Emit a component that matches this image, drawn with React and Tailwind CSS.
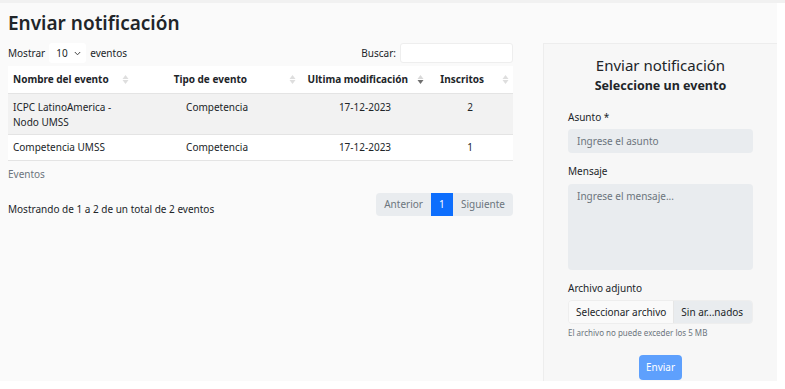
import React from "react";

function SortIcon({ active }) {
  return (
    <svg width="7" height="11" viewBox="0 0 7 11" className="shrink-0">
      <path d="M3.5 1 L6.5 5 H0.5 Z" fill={active ? "#d8d8d8" : "#dedede"} />
      <path d="M3.5 10 L6.5 6 H0.5 Z" fill={active ? "#6f6f6f" : "#dedede"} />
    </svg>
  );
}

export default function App() {
  return (
    <div className="w-[785px] h-[389px] bg-white overflow-hidden text-[#212529]" style={{ fontFamily: '"Noto Sans", "Open Sans", sans-serif' }}>
      <div className="h-[3px] bg-[#f1f1f1]" />
      <div className="w-[777px] h-[378px] bg-[#fafafa] flex">
        {/* Left */}
        <div className="w-[513px] pl-[8px] flex flex-col">
          <h1 className="text-[19px] font-semibold leading-none mt-[11px] h-[29px] text-[#212529]">Enviar notificación</h1>
          <div className="flex items-center justify-between h-[20px] text-[10px]">
            <div className="flex items-center gap-[4px]">
              <span>Mostrar</span>
              <div className="w-[37px] h-[20px] bg-white rounded-[3px] flex items-center pl-[7px] gap-[6px]">
                <span>10</span>
                <svg width="7" height="5" viewBox="0 0 7 5"><path d="M0.8 1 L3.5 3.8 L6.2 1" stroke="#444" strokeWidth="1" fill="none" /></svg>
              </div>
              <span>eventos</span>
            </div>
            <div className="flex items-center gap-[4px]">
              <span>Buscar:</span>
              <div className="w-[113px] h-[20px] bg-white rounded-[3px] border border-[#eeeeee]" />
            </div>
          </div>
          <table className="w-[505px] mt-[3px] text-[10px] border-collapse">
            <thead>
              <tr className="bg-white h-[27px] border-b border-[#e4e4e4]">
                <th className="text-left pl-[5px] font-bold w-[124px]"><div className="flex items-center justify-between pr-[3px]"><span>Nombre del evento</span><SortIcon /></div></th>
                <th className="font-bold w-[164px]"><div className="flex items-center justify-end gap-[42px] pr-[0px]"><span>Tipo de evento</span><SortIcon /></div></th>
                <th className="font-bold w-[136px]"><div className="flex items-center justify-end gap-[9px] pr-[8px]"><span>Ultima modificación</span><SortIcon active /></div></th>
                <th className="font-bold"><div className="flex items-center justify-end gap-[18px] pr-[4px]"><span>Inscritos</span><SortIcon /></div></th>
              </tr>
            </thead>
            <tbody>
              <tr className="bg-[#f2f2f2] h-[41px] border-b border-[#e4e4e4] align-top">
                <td className="pl-[5px] pt-[6px] leading-[15px]">ICPC LatinoAmerica -<br />Nodo UMSS</td>
                <td className="pt-[6px] leading-[15px] text-right pr-[48px]">Competencia</td>
                <td className="pt-[6px] leading-[15px] text-center pl-[2px]">17-12-2023</td>
                <td className="pt-[6px] leading-[15px] text-center pr-[5px]">2</td>
              </tr>
              <tr className="bg-white h-[26px] border-b border-[#e4e4e4]">
                <td className="pl-[5px]">Competencia UMSS</td>
                <td className="text-right pr-[48px]">Competencia</td>
                <td className="text-center pl-[2px]">17-12-2023</td>
                <td className="text-center pr-[5px]">1</td>
              </tr>
            </tbody>
          </table>
          <div className="text-[10px] text-[#6c757d] mt-[6px] leading-[14px]">Eventos</div>
          <div className="flex items-start justify-between w-[505px] mt-[12px]">
            <span className="text-[10px] pt-[9px] leading-[14px]">Mostrando de 1 a 2 de un total de 2 eventos</span>
            <div className="flex h-[23px] text-[10px] rounded-[4px] overflow-hidden">
              <div className="bg-[#e9ecef] text-[#6c757d] px-[8px] flex items-center">Anterior</div>
              <div className="bg-[#0d6efd] text-white w-[22px] flex items-center justify-center">1</div>
              <div className="bg-[#e9ecef] text-[#6c757d] px-[8px] flex items-center">Siguiente</div>
            </div>
          </div>
        </div>
        {/* Right */}
        <div className="ml-[30px] mt-[40px] w-[235px] h-[338px] bg-[#f7f7f7] border-t border-l border-[#ededed] flex flex-col items-center">
          <div className="text-[15px] mt-[11px] leading-[20px]">Enviar notificación</div>
          <div className="text-[12.5px] font-bold mt-[2px] leading-[18px]">Seleccione un evento</div>
          <div className="w-[185px] mt-[15px] text-[10px]">
            <div className="leading-[14px]">Asunto *</div>
            <div className="mt-[5px] h-[24px] bg-[#e9ecef] rounded-[4px] flex items-center pl-[9px] text-[#6c757d]">Ingrese el asunto</div>
            <div className="mt-[11px] leading-[14px]">Mensaje</div>
            <div className="mt-[6px] h-[86px] bg-[#e9ecef] rounded-[4px] pl-[9px] pt-[5px] text-[#6c757d]">Ingrese el mensaje...</div>
            <div className="mt-[11px] leading-[14px]">Archivo adjunto</div>
            <div className="mt-[5px] h-[24px] rounded-[4px] border border-[#eeeeee] flex overflow-hidden">
              <div className="bg-[#fafafa] px-[7px] flex items-center border-r border-[#e6e6e6]">Seleccionar archivo</div>
              <div className="bg-[#e9ecef] flex-1 flex items-center pl-[7px]">Sin ar...nados</div>
            </div>
            <div className="mt-[2px] text-[8px] text-[#6c757d] leading-[14px]">El archivo no puede exceder los 5 MB</div>
          </div>
          <div className="mt-[15px] w-[43px] h-[25px] rounded-[4px] bg-[#5ea0fd] text-white text-[10px] flex items-center justify-center">Enviar</div>
        </div>
      </div>
    </div>
  );
}
